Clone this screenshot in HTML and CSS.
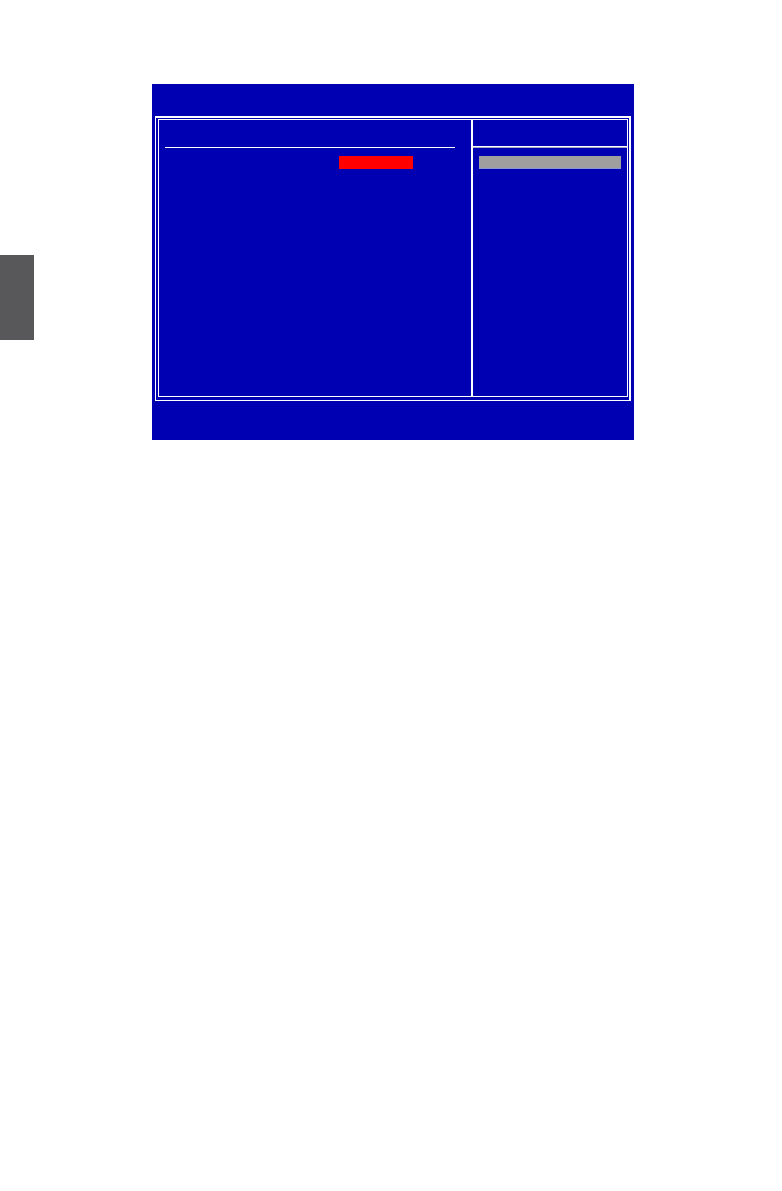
FILE: index.html
```html
<!DOCTYPE html>
<html lang="en">
<head>
    <meta charset="UTF-8">
    <title>Setup Screen</title>
    <link rel="stylesheet" href="styles.css">
</head>
<body>
<div class="page">
    <aside class="side-tab"></aside>
    <main class="screen">
        <div class="frame">
            <div class="panels">
                <section class="settings">
                    <div class="settings-head"></div>
                    <div class="setting-row">
                        <div class="selected-value"></div>
                    </div>
                </section>
                <section class="help">
                    <div class="help-head"></div>
                    <div class="help-bar"></div>
                </section>
            </div>
        </div>
    </main>
</div>
</body>
</html>
```

FILE: styles.css
```css
body {
    margin: 0;
    background-color: #FFFFFF;
    font-family: "Liberation Sans", Arial, sans-serif;
}
.page {
    display: flex;
    align-items: flex-start;
    gap: 118px;
    padding: 84px 148px 84px 0;
}
.side-tab {
    width: 34px;
    height: 85px;
    margin-top: 171px;
    background-color: #58585A; /* Dark grey */
}
.screen {
    flex: 1;
    padding: 32px 3px 39px;
    background-color: #0000B3; /* BIOS blue */
}
/* Double line around both panels */
.frame {
    padding: 1px 1px 3px 2px;
    border: 1px solid #FFFFFF;
    border-top-width: 2px;
    border-right-width: 2px;
}
.panels {
    display: grid;
    grid-template-columns: 2fr 1fr;
    min-height: 276px;
    border: 1px solid #FFFFFF;
}
.settings-head {
    height: 27px;
    margin: 0 16px 0 6px;
    border-bottom: 1px solid #FFFFFF;
}
.setting-row {
    display: grid;
    grid-template-columns: 180px 74px;
    margin-top: 8px;
}
.selected-value {
    grid-column: 2;
    height: 13px;
    background-color: #FF0000; /* Red */
}
.help {
    border-left: 2px solid #FFFFFF;
}
.help-head {
    height: 26px;
    border-bottom: 1px solid #FFFFFF;
    box-shadow: 0 1px 0 #A8A8C8;
}
.help-bar {
    height: 12px;
    margin: 9px 6px 0;
    background-color: #9F9F9F; /* Light grey */
    border-bottom: 1px solid #8C96D8; /* Soft blue edge */
}
```
